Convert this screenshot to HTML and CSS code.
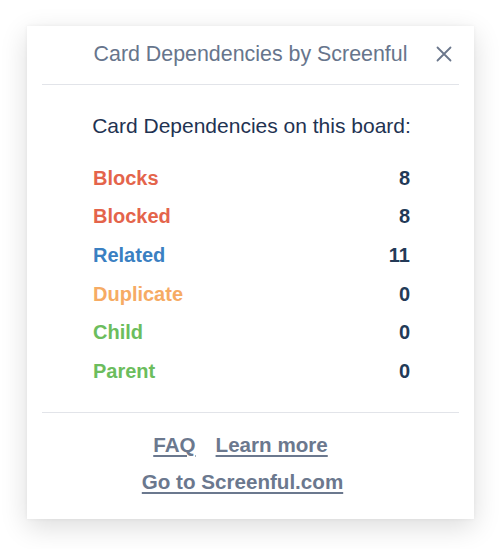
FILE: index.html
```html
<!DOCTYPE html>
<html lang="en">
<head>
<meta charset="utf-8">
<title>Card Dependencies by Screenful</title>
<link rel="stylesheet" href="styles.css">
</head>
<body>
<div class="card">
  <div class="header">
    <span class="title">Card Dependencies by Screenful</span>
    <span class="close" aria-label="Close">
      <svg width="16" height="16" viewBox="0 0 16 16"><path d="M1.5 1.5 L14.5 14.5 M14.5 1.5 L1.5 14.5" stroke="#6b778c" stroke-width="1.8" stroke-linecap="round" fill="none"/></svg>
    </span>
  </div>
  <div class="content">
    <div class="heading">Card Dependencies on this board:</div>
    <div class="row"><span class="label red">Blocks</span><span class="num">8</span></div>
    <div class="row"><span class="label red">Blocked</span><span class="num">8</span></div>
    <div class="row"><span class="label blue">Related</span><span class="num">11</span></div>
    <div class="row"><span class="label orange">Duplicate</span><span class="num">0</span></div>
    <div class="row"><span class="label green">Child</span><span class="num">0</span></div>
    <div class="row"><span class="label green">Parent</span><span class="num">0</span></div>
  </div>
  <div class="footer">
    <div class="links"><a class="link first" href="#">FAQ</a><a class="link first" href="#">Learn more</a></div>
    <div class="links"><a class="link second" href="#">Go to Screenful.com</a></div>
  </div>
</div>
</body>
</html>
```
FILE: styles.css
```css
html, body {
  margin: 0;
  padding: 0;
  background: #ffffff;
}
body {
  font-family: "Liberation Sans", Arial, Helvetica, sans-serif;
  padding: 26px 0 30px 27px;
}
.card {
  width: 447px;
  background: #ffffff;
  box-shadow: 0 8px 26px rgba(0, 0, 0, 0.14), 0 0 4px rgba(0, 0, 0, 0.05);
}
.header {
  position: relative;
  height: 56px;
  padding-bottom: 2px;
  margin: 0 15px;
  border-bottom: 1px solid #e2e4e9;
  display: flex;
  align-items: center;
  justify-content: center;
}
.title {
  font-size: 21.4px;
  color: #67758c;
  line-height: 24px;
}
.close {
  position: absolute;
  right: 7px;
  top: 20px;
  width: 16px;
  height: 16px;
  display: flex;
}
.content {
  padding: 29px 64px 21px 66px;
}
.heading {
  text-align: center;
  font-size: 21px;
  line-height: 24px;
  color: #1f3352;
  margin: 0 -3px 21px -3px;
}
.row {
  height: 38.6px;
  display: flex;
  align-items: center;
  justify-content: space-between;
  font-size: 20px;
  font-weight: bold;
}
.num {
  color: #233a57;
}
.red { color: #e4644b; }
.blue { color: #3a80c2; }
.orange { color: #f6ab64; }
.green { color: #6cbd5d; }
.footer {
  margin: 0 15px;
  border-top: 1px solid #e2e4e9;
  padding: 14px 0 18px;
}
.links {
  height: 37px;
  display: flex;
  align-items: center;
  justify-content: center;
}
.link {
  font-size: 20.6px;
  font-weight: bold;
  color: #6b788e;
  text-decoration: underline;
  text-underline-offset: 3px;
  text-decoration-thickness: 1.5px;
}
.link.first {
  margin-right: 20px;
}
.link.second {
  margin-right: 16px;
}
```
